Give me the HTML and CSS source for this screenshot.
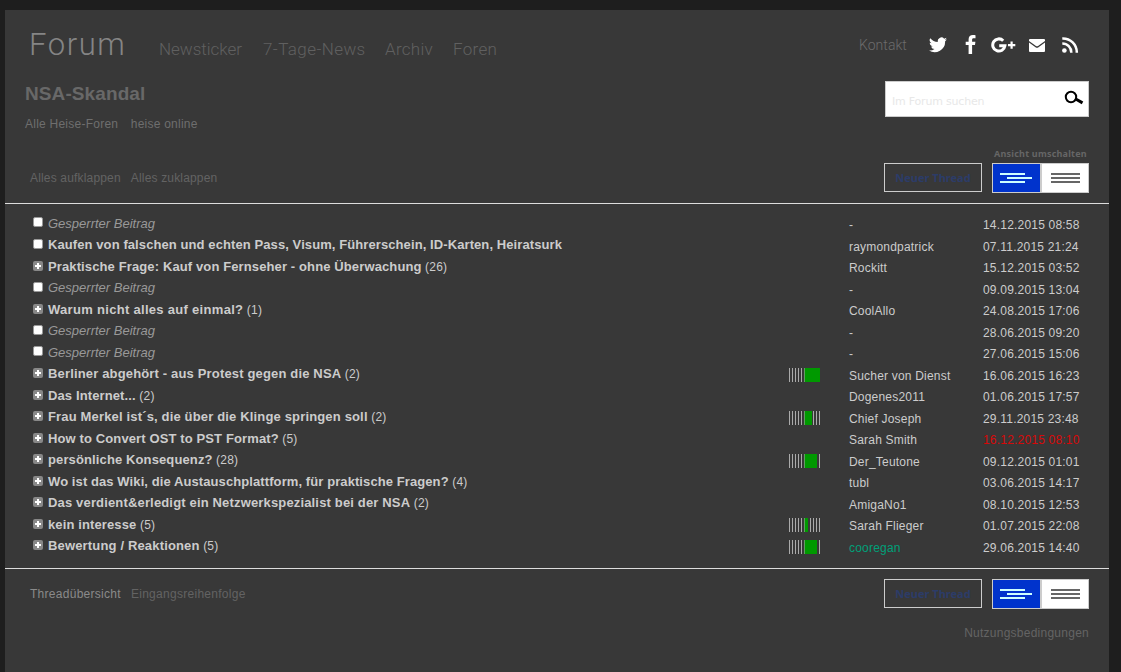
FILE: index.html
```html
<!DOCTYPE html>
<html lang="de">
<head>
<meta charset="utf-8">
<title>NSA-Skandal | Forum</title>
<link rel="stylesheet" href="styles.css">
</head>
<body>
<div class="page">
  <header class="top">
    <a class="brand">Forum</a>
    <nav class="nav"><a class="n1">Newsticker</a><a class="n2">7-Tage-News</a><a class="n3">Archiv</a><a class="n4">Foren</a></nav>
    <a class="contact">Kontakt</a>
    <div class="social">
      <svg class="tw" width="18" height="16" viewBox="0 0 24 20"><path d="M24 2.4a10 10 0 0 1-2.8.8A5 5 0 0 0 23.300.4a10 10 0 0 1-3.100 1.200A4.900 4.900 0 0 0 11.800 6.100 14 14 0 0 1 1.700.9a4.900 4.900 0 0 0 1.500 6.600A5 5 0 0 1 1 6.900a4.900 4.900 0 0 0 3.900 4.900 5 5 0 0 1-2.200.1 4.900 4.900 0 0 0 4.600 3.400A10 10 0 0 1 0 17.400 14 14 0 0 0 21.500 4.900 10 10 0 0 0 24 2.400z"/></svg>
      <svg class="fb" width="11" height="19" viewBox="0 0 11 19"><path d="M10.500.2v3H8.700C7.400 3.200 7.100 3.900 7.100 4.800v2h3.300L10 10.100H7.100V19H3.600v-8.900H.7V6.800h2.900V4.300C3.600 1.500 5.300 0 7.900 0c1.200 0 2.300.1 2.600.2z"/></svg>
      <svg class="gp" width="25" height="16" viewBox="0 0 25 16"><path d="M12.200 3.700A6.100 6.100 0 1 0 13.900 8.800H8.200" fill="none" stroke="#fff" stroke-width="3"/><path d="M19.500 4.500h2.200V7h2.600v2.200h-2.600v2.500h-2.200V9.200H17V7h2.500z"/></svg>
      <svg class="ml" width="16" height="13" viewBox="0 0 16 13"><path d="M1 0h14a1 1 0 0 1 1 1v1L9 7Q8 7.600 7 7L0 2V1a1 1 0 0 1 1-1zM0 3.500l6.500 4.700q1.500 1 3 0L16 3.500V12a1 1 0 0 1-1 1H1a1 1 0 0 1-1-1z"/></svg>
      <svg class="rs" width="17" height="16" viewBox="0 0 17 16"><circle cx="2.400" cy="13.500" r="2.300"/><path d="M.3 6.500a9 9 0 0 1 9 9.300M.3 1.400a14 14 0 0 1 14.500 14.400" fill="none" stroke="#fff" stroke-width="2.500"/></svg>
    </div>
  </header>
  <section class="intro">
    <div>
      <h1>NSA-Skandal</h1>
      <nav class="crumbs"><a>Alle Heise-Foren</a><a>heise online</a></nav>
    </div>
    <form class="search">
      <span>Im Forum suchen</span>
      <svg width="20" height="15" viewBox="0 0 20 15" fill="none" stroke="#000"><circle cx="7" cy="7" r="5.200" stroke-width="2"/><path d="M11.300 8.800l7.200 4.100" stroke-width="3"/></svg>
    </form>
  </section>
  <div class="tools">
    <div class="links"><a>Alles aufklappen</a><a>Alles zuklappen</a></div>
    <a class="new">Neuer Thread</a>
    <div class="view">
      <span class="hint">Ansicht umschalten</span>
      <div class="toggle">
        <span class="on"><svg width="32" height="10" shape-rendering="crispEdges"><path d="M0 0h25v2H0zM7 4h25v2H7zM0 8h25v2H0z"/></svg></span>
        <span class="off"><svg width="29" height="10" shape-rendering="crispEdges"><path d="M0 0h29v2H0zM0 4h29v2H0zM0 8h29v2H0z"/></svg></span>
      </div>
    </div>
  </div>
  <main class="threads" id="threads"></main>
  <div class="tools bottom">
    <div class="links"><a class="cur">Threadübersicht</a><a>Eingangsreihenfolge</a></div>
    <a class="new">Neuer Thread</a>
    <div class="toggle">
      <span class="on"><svg width="32" height="10" shape-rendering="crispEdges"><path d="M0 0h25v2H0zM7 4h25v2H7zM0 8h25v2H0z"/></svg></span>
      <span class="off"><svg width="29" height="10" shape-rendering="crispEdges"><path d="M0 0h29v2H0zM0 4h29v2H0zM0 8h29v2H0z"/></svg></span>
    </div>
  </div>
  <footer class="terms"><a>Nutzungsbedingungen</a></footer>
</div>
<script src="threads.js"></script>
</body>
</html>
```
FILE: styles.css
```css
* { box-sizing: border-box; }
body { margin: 0; padding: 10px 12px 0 5px; height: 672px; overflow: hidden; background: #1e1e1e; font: 12px/16px "Liberation Sans", Arial, sans-serif; color: #ccc; white-space: nowrap; }
.page { height: 662px; background: #383838; }
.top { display: flex; height: 71px; padding: 0 20px 0 24px; font-family: Roboto, sans-serif; font-weight: 300; }
.brand { width: 130px; padding-top: 12px; font-size: 31px; line-height: 46px; letter-spacing: 1.6px; color: #858585; }
.nav { display: flex; flex: 1; padding-top: 27px; font-size: 17px; line-height: 24px; letter-spacing: .3px; color: #606060; }
.n1 { width: 104px; letter-spacing: 0; }
.n2 { width: 122px; letter-spacing: .42px; }
.n3 { width: 68px; }
.contact { padding-top: 25px; width: 70px; font-size: 14px; line-height: 20px; letter-spacing: .05px; color: #6c6c6c; }
.social { display: flex; align-items: flex-start; width: 160px; padding-top: 25px; }
.social svg { fill: #fff; flex: none; }
.tw { margin: 2px 19px 0 0; }
.fb { margin: 0 15px 0 -1px; }
.gp { margin: 2px 13px 0 0; }
.ml { margin: 4px 17px 0 0; }
.rs { margin-top: 2px; }
.intro { display: flex; justify-content: space-between; height: 66px; padding: 0 20px; }
h1 { margin: 0; padding-top: 1px; font-size: 19px; line-height: 24px; letter-spacing: .1px; color: #686868; }
.crumbs { display: flex; gap: 12.5px; padding-top: 10px; letter-spacing: .24px; color: #6e6e6e; }
.search { display: flex; justify-content: space-between; width: 204px; height: 36px; padding: 8px 4px 0 6px; background: #fff; border: 1px solid #ccc; font: 11px/23px "DejaVu Sans", sans-serif; letter-spacing: -.2px; color: #e8e8e8; }
.tools { display: flex; height: 57px; padding: 0 20px 0 25px; border-bottom: 1px solid #ddd; }
.links { display: flex; flex: 1; gap: 10px; padding-top: 23px; letter-spacing: .17px; color: #636363; }
.new { width: 98px; height: 29px; margin: 16px 10px 0 0; border: 1px solid #ccc; text-align: center; font: bold 11px/27px "Noto Sans", sans-serif; color: #2c3c68; }
.view { width: 97px; }
.hint { display: block; height: 16px; text-align: center; font: bold 9px/13px "Noto Sans", sans-serif; letter-spacing: .22px; color: #666; }
.toggle { display: flex; width: 97px; height: 30px; border: 1px solid #ccc; }
.on, .off { display: flex; align-items: center; justify-content: center; }
.on { width: 47px; padding-right: 1px; background: #03c; fill: #cff; }
.off { flex: 1; background: #fff; border-left: 2px solid #ccc; fill: #666; }
.threads { display: grid; grid-template-columns: 15px 741px 60px 134px 1fr; grid-auto-rows: 21.5px; height: 365px; padding: 10px 20px 0 28px; border-bottom: 1px solid #ddd; letter-spacing: .2px; }
.title { margin-top: -.1px; line-height: 19px; }
.title b { font-size: 13px; letter-spacing: .12px; }
.title .tight { letter-spacing: .09px; }
.title .loose { letter-spacing: .16px; }
.title .wide { letter-spacing: .3px; }
.title i { font-size: 13px; letter-spacing: 0; color: #999; }
.user, .date { line-height: 22px; }
.box { width: 10px; height: 10px; margin-top: 3.4px; border: 1px solid #999; border-radius: 2px; background: #fff; }
.plus { display: block; width: 10px; height: 10px; margin-top: 3.6px; background: #888; border-radius: 2px; }
.meter { display: flex; width: 32px; height: 14px; margin-top: 3.4px; background: repeating-linear-gradient(90deg, #aaa 0 1px, transparent 1px 3px); }
.meter span { height: 14px; margin-left: 15px; background: #090; border-left: 1px solid #696; }
.red { color: #d80808; }
.green { color: #00a078; }
.bottom { height: 54px; border: 0; }
.bottom .links { padding-top: 17px; letter-spacing: .28px; }
.bottom .new, .bottom .toggle { margin-top: 10px; }
.cur { color: #8a8a8a; }
.terms { padding: 2px 20px 0; text-align: right; letter-spacing: .25px; color: #646464; }
```
FILE: threads.js
```js
const rows = [
  [null, 0, 0, '-', '14.12.2015 08:58'],
  ['Kaufen von falschen und echten Pass, Visum, Führerschein, ID-Karten, Heiratsurk', 0, 0, 'raymondpatrick', '07.11.2015 21:24', '', '', 'tight'],
  ['Praktische Frage: Kauf von Fernseher - ohne Überwachung', 26, 0, 'Rockitt', '15.12.2015 03:52'],
  [null, 0, 0, '-', '09.09.2015 13:04'],
  ['Warum nicht alles auf einmal?', 1, 0, 'CoolAllo', '24.08.2015 17:06', '', '', 'wide'],
  [null, 0, 0, '-', '28.06.2015 09:20'],
  [null, 0, 0, '-', '27.06.2015 15:06'],
  ['Berliner abgehört - aus Protest gegen die NSA', 2, 16, 'Sucher von Dienst', '16.06.2015 16:23', '', '', 'loose'],
  ['Das Internet...', 2, 0, 'Dogenes2011', '01.06.2015 17:57'],
  ['Frau Merkel ist´s, die über die Klinge springen soll', 2, 8, 'Chief Joseph', '29.11.2015 23:48', '', '', 'loose'],
  ['How to Convert OST to PST Format?', 5, 0, 'Sarah Smith', '16.12.2015 08:10', '', 'red'],
  ['persönliche Konsequenz?', 28, 13, 'Der_Teutone', '09.12.2015 01:01'],
  ['Wo ist das Wiki, die Austauschplattform, für praktische Fragen?', 4, 0, 'tubl', '03.06.2015 14:17', '', '', 'tight'],
  ['Das verdient&amp;erledigt ein Netzwerkspezialist bei der NSA', 2, 0, 'AmigaNo1', '08.10.2015 12:53', '', '', 'loose'],
  ['kein interesse', 5, 4, 'Sarah Flieger', '01.07.2015 22:08'],
  ['Bewertung / Reaktionen', 5, 13, 'cooregan', '29.06.2015 14:40', 'green', '', 'loose']
];
const plus = '<svg class="plus" viewBox="0 0 10 10" shape-rendering="crispEdges"><path fill="#fff" d="M4 2h2v2h2v2H6v2H4V6H2V4h2z"/></svg>';
document.getElementById('threads').innerHTML = rows.map(([t, n, m, u, d, uc = '', dc = '', tc = '']) =>
  `<div>${n ? plus : '<div class="box"></div>'}</div>` +
  `<div class="title">${t ? `<b class="${tc}">${t}</b>${n ? ` (${n})` : ''}` : '<i>Gesperrter Beitrag</i>'}</div>` +
  `<div>${m ? `<div class="meter"><span style="width:${m}px"></span></div>` : ''}</div>` +
  `<div class="user ${uc}">${u}</div><div class="date ${dc}">${d}</div>`).join('');
```
